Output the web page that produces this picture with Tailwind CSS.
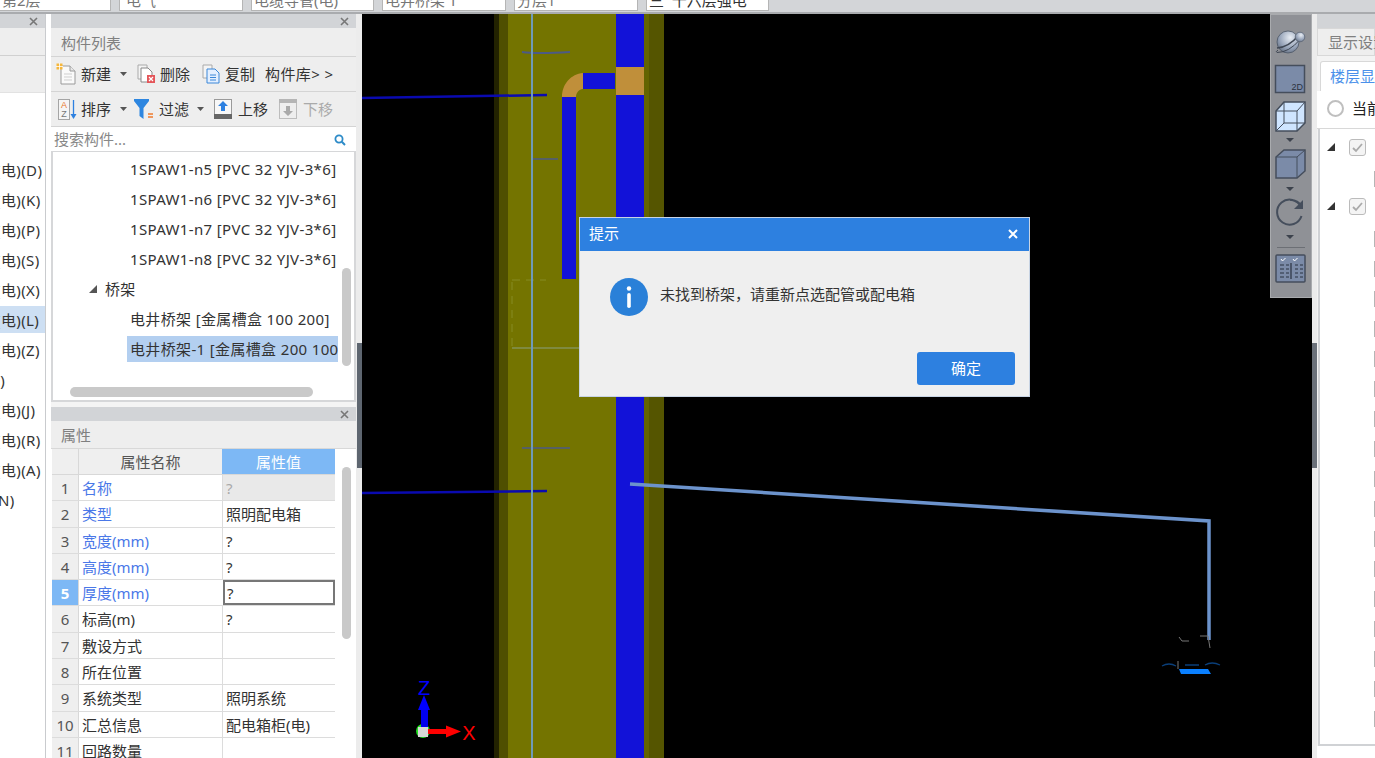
<!DOCTYPE html>
<html lang="zh"><head><meta charset="utf-8"><script src="https://cdn.jsdelivr.net/npm/@tailwindcss/browser@4"></script></head>
<body class="m-0 overflow-hidden">
<div class="flex flex-col w-[1375px] h-[758px] overflow-hidden bg-[#eeeeee] text-[15px] text-[#333] [font-family:'Noto_Sans','Noto_Sans_CJK_SC',sans-serif]">
  <!-- top strip -->
  <div class="h-[14px] shrink-0 flex gap-2 bg-[#d3d5d8] border-b-2 border-[#a9abae] pl-0">
    <div class="w-[111px] h-[11px] bg-white border-r border-b border-[#b5b5b5] overflow-hidden leading-[18px] text-[#777] whitespace-nowrap"><div class="-mt-[9px] pl-[2px]">第2层</div></div>
    <div class="w-[124px] h-[11px] bg-white border border-t-0 border-[#b5b5b5] overflow-hidden leading-[18px] text-[#777] whitespace-nowrap"><div class="-mt-[9px] pl-[6px]">电气</div></div>
    <div class="w-[123px] h-[11px] bg-white border border-t-0 border-[#b5b5b5] overflow-hidden leading-[18px] text-[#777] whitespace-nowrap"><div class="-mt-[9px] pl-[2px]">电缆导管(电)</div></div>
    <div class="w-[124px] h-[11px] bg-white border border-t-0 border-[#b5b5b5] overflow-hidden leading-[18px] text-[#777] whitespace-nowrap"><div class="-mt-[9px] pl-[2px]">电井桥架 T</div></div>
    <div class="w-[124px] h-[11px] bg-white border border-t-0 border-[#b5b5b5] overflow-hidden leading-[18px] text-[#777] whitespace-nowrap"><div class="-mt-[9px] pl-[2px]">分层1</div></div>
    <div class="w-[123px] h-[11px] bg-white border border-t-0 border-[#b5b5b5] overflow-hidden leading-[18px] text-[#333] whitespace-nowrap"><div class="-mt-[9px] pl-[2px]">三&nbsp;&nbsp;十六层强电</div></div>
  </div>

  <div class="flex h-[744px]">
    <!-- left panel -->
    <div class="w-[51px] shrink-0 bg-white">
      <div class="w-[46px] h-full border-r border-[#c9cbce] overflow-hidden flex flex-col">
        <div class="h-[14px] bg-[#d2d4d7] flex items-center justify-end pr-[7px] shrink-0"><svg class="w-[9px] h-[9px]" viewBox="0 0 9 9"><path d="M1 1l7 7M8 1l-7 7" stroke="#777" stroke-width="1.6"/></svg></div>
        <div class="h-[28px] bg-[#eeeeee] border-b border-[#d0d0d0] shrink-0"></div>
        <div class="h-[36px] bg-[#eeeeee] shrink-0"></div>
        <div class="h-[1px] bg-[#e2e2e2] shrink-0"></div>
        <div class="pt-[62px] bg-white whitespace-nowrap tracking-[0.4px]">
          <div class="h-[30px] leading-[30px] -ml-[4px]">(电)(D)</div>
          <div class="h-[30px] leading-[30px] -ml-[4px]">(电)(K)</div>
          <div class="h-[30px] leading-[30px] -ml-[4px]">(电)(P)</div>
          <div class="h-[30px] leading-[30px] -ml-[4px]">(电)(S)</div>
          <div class="h-[30px] leading-[30px] -ml-[4px]">(电)(X)</div>
          <div class="h-[27px] mt-[1px] mb-[2px] leading-[28px] bg-[#cddff3]"><span class="-ml-[4px] inline-block">(电)(L)</span></div>
          <div class="h-[30px] leading-[30px] -ml-[4px]">(电)(Z)</div>
          <div class="h-[30px] leading-[30px] -ml-[4px]">&nbsp;)</div>
          <div class="h-[30px] leading-[30px] -ml-[4px]">(电)(J)</div>
          <div class="h-[30px] leading-[30px] -ml-[4px]">(电)(R)</div>
          <div class="h-[30px] leading-[30px] -ml-[4px]">(电)(A)</div>
          <div class="h-[30px] leading-[30px] -ml-[2px]">N)</div>
        </div>
      </div>
    </div>

    <!-- middle panel -->
    <div class="w-[305px] shrink-0 flex flex-col bg-[#eeeeee]">
      <div class="h-[14px] bg-[#d2d4d7] flex items-center justify-end pr-[7px] shrink-0"><svg class="w-[9px] h-[9px]" viewBox="0 0 9 9"><path d="M1 1l7 7M8 1l-7 7" stroke="#777" stroke-width="1.6"/></svg></div>
      <div class="h-[29px] flex items-center pl-[10px] pt-[2px] text-[#808080] border-b border-[#d4d4d4] shrink-0">构件列表</div>
      <!-- toolbar 1 -->
      <div class="h-[35px] flex items-center border-b border-[#d4d4d4] shrink-0 whitespace-nowrap">
        <svg class="ml-[5px] w-[21px] h-[22px] shrink-0" viewBox="0 0 21 22"><path d="M5 3h9l5 5v13H5z" fill="#fafafa" stroke="#9a9a9a"/><path d="M14 3v5h5" fill="#e8e8e8" stroke="#9a9a9a"/><path d="M8 11h8M8 14h8M8 17h8" stroke="#cfcfcf"/><rect x="0.5" y="0.5" width="6" height="6" fill="#f6b73c"/><path d="M3.5 0v7M0 3.5h7" stroke="#fff" stroke-width=".8"/></svg>
        <span class="ml-[4px] w-[31px]">新建</span>
        <svg class="ml-[8px] w-[7px] h-[4px]" viewBox="0 0 7 4"><path d="M0 0h7L3.500 4z" fill="#555"/></svg>
        <svg class="ml-[10px] w-[19px] h-[20px] shrink-0" viewBox="0 0 19 20"><path d="M1 1h9v14H1z" fill="#f4f4f4" stroke="#aaa"/><path d="M4 4h7l4 4v10H4z" fill="#fff" stroke="#888"/><rect x="10" y="11" width="8" height="8" fill="#e4565a"/><path d="M12 13l4 4M16 13l-4 4" stroke="#fff" stroke-width="1.2"/></svg>
        <span class="ml-[4px] w-[30px]">删除</span>
        <svg class="ml-[12px] w-[18px] h-[20px] shrink-0" viewBox="0 0 18 20"><path d="M1 1h9v13H1z" fill="#f4f4f4" stroke="#aaa"/><path d="M5 5h8l4 4v10H5z" fill="#e3efff" stroke="#3a87d8"/><path d="M8 11h6M8 13.500h6M8 16h6" stroke="#3a87d8"/></svg>
        <span class="ml-[5px] w-[30px]">复制</span>
        <span class="ml-[10px] tracking-[0.4px]">构件库&gt;&nbsp;&gt;</span>
      </div>
      <!-- toolbar 2 -->
      <div class="h-[35px] flex items-center border-b border-[#d4d4d4] shrink-0 whitespace-nowrap">
        <svg class="ml-[7px] w-[19px] h-[21px] shrink-0" viewBox="0 0 19 21"><rect x="0.5" y="0.5" width="11" height="20" fill="#f5f5f5" stroke="#a5a5a5"/><text x="6" y="9" text-anchor="middle" font-size="9" fill="#e8762c" font-family="Liberation Sans">A</text><text x="6" y="18" text-anchor="middle" font-size="9" fill="#777" font-family="Liberation Sans">Z</text><path d="M15.500 1v17" stroke="#2d80e0" stroke-width="1.300"/><path d="M12.500 15l3 5 3-5z" fill="#2d80e0"/></svg>
        <span class="ml-[4px] w-[31px]">排序</span>
        <svg class="ml-[8px] w-[7px] h-[4px]" viewBox="0 0 7 4"><path d="M0 0h7L3.500 4z" fill="#555"/></svg>
        <svg class="ml-[7px] w-[20px] h-[20px] shrink-0" viewBox="0 0 20 20"><path d="M0 0h15v2L9.500 9v11L5.500 17V9L0 2z" fill="#2d86e0"/><path d="M14 15h5M14 18h5" stroke="#ee7b2e" stroke-width="1.500"/></svg>
        <span class="ml-[5px] w-[30px]">过滤</span>
        <svg class="ml-[8px] w-[7px] h-[4px]" viewBox="0 0 7 4"><path d="M0 0h7L3.500 4z" fill="#555"/></svg>
        <svg class="ml-[10px] w-[18px] h-[20px] shrink-0" viewBox="0 0 18 20"><rect x="0.500" y="0.500" width="17" height="19" fill="#f7f7f7" stroke="#9a9a9a"/><rect x="0" y="15" width="18" height="5" fill="#666"/><path d="M9 2l5 5h-3v5H7V7H4z" fill="#2d80e0"/></svg>
        <span class="ml-[6px] w-[30px]">上移</span>
        <svg class="ml-[11px] w-[18px] h-[20px] shrink-0" viewBox="0 0 18 20"><rect x="0.500" y="0.500" width="17" height="19" fill="#eee" stroke="#bdbdbd"/><rect x="0" y="0" width="18" height="4" fill="#b5b5b5"/><path d="M9 17l5-5h-3V7H7v5H4z" fill="#a9a9a9"/></svg>
        <span class="ml-[6px] text-[#aaa]">下移</span>
      </div>
      <!-- search -->
      <div class="h-[24px] bg-white flex items-center justify-between pl-[3px] pr-[10px] pt-[1px] text-[#888] shrink-0">
        <span>搜索构件...</span>
        <svg class="w-[12px] h-[12px]" viewBox="0 0 12 12"><circle cx="5" cy="5" r="3.600" fill="none" stroke="#2d8bc8" stroke-width="1.800"/><path d="M7.800 7.800L11 11" stroke="#2d8bc8" stroke-width="2"/></svg>
      </div>
      <!-- tree -->
      <div class="relative h-[251px] shrink-0 bg-white border-2 border-t-[1px] border-[#d6d7d9] overflow-hidden whitespace-nowrap tracking-[0.35px] pt-[2px]">
        <div class="h-[30px] leading-[30px] pl-[77px] w-[285px] overflow-hidden">1SPAW1-n5 [PVC 32 YJV-3*6]</div>
        <div class="h-[30px] leading-[30px] pl-[77px] w-[285px] overflow-hidden">1SPAW1-n6 [PVC 32 YJV-3*6]</div>
        <div class="h-[30px] leading-[30px] pl-[77px] w-[285px] overflow-hidden">1SPAW1-n7 [PVC 32 YJV-3*6]</div>
        <div class="h-[30px] leading-[30px] pl-[77px] w-[285px] overflow-hidden">1SPAW1-n8 [PVC 32 YJV-3*6]</div>
        <div class="h-[30px] flex items-center pl-[36px]"><svg class="w-[8px] h-[8px]" viewBox="0 0 8 8"><path d="M8 0v8H0z" fill="#555"/></svg><span class="ml-[8px]">桥架</span></div>
        <div class="h-[30px] leading-[30px] pl-[77px] w-[285px] overflow-hidden">电井桥架 [金属槽盒 100 200]</div>
        <div class="h-[26px] leading-[26px] ml-[74px] pl-[3px] mt-[2px] w-[211px] overflow-hidden bg-[#b3cff0]">电井桥架-1 [金属槽盒 200 100]</div>
        <div class="absolute left-[289px] top-[116px] w-[9px] h-[98px] rounded-full bg-[#c9c9c9]"></div>
        <div class="absolute left-[17px] top-[235px] w-[243px] h-[10px] rounded-full bg-[#c9c9c9]"></div>
      </div>
      <div class="h-[5px] bg-[#f4f4f4] shrink-0"></div>
      <div class="h-[14px] bg-[#d2d4d7] flex items-center justify-end pr-[7px] shrink-0"><svg class="w-[9px] h-[9px]" viewBox="0 0 9 9"><path d="M1 1l7 7M8 1l-7 7" stroke="#777" stroke-width="1.6"/></svg></div>
      <div class="h-[27px] flex items-center pl-[10px] pt-[2px] text-[#808080] shrink-0">属性</div>
      <!-- table -->
      <div class="relative flex-1 bg-white overflow-hidden whitespace-nowrap border-t border-[#d8d8d8]">
        <div class="flex h-[26px] bg-[#efefef] border-b border-[#d8d8d8] w-[283px] ml-[1px]">
          <div class="w-[27px] border-r border-[#d8d8d8]"></div>
          <div class="w-[143px] text-center leading-[26px] text-[#555]">属性名称</div>
          <div class="w-[113px] text-center leading-[26px] bg-[#7db8f5] text-white">属性值</div>
        </div>
        <div class="flex h-[26.3px] w-[283px] ml-[1px] border-b border-[#dcdcdc]"><div class="w-[27px] bg-[#efefef] border-r border-[#d8d8d8] text-center text-[#555] leading-[26px]">1</div><div class="w-[144px] pl-[3px] border-r border-[#dcdcdc] text-[#4a78e8] leading-[26px]">名称</div><div class="flex-1 pl-[3px] bg-[#e9e9e9] text-[#aaa] leading-[26px]">?</div></div>
        <div class="flex h-[26.3px] w-[283px] ml-[1px] border-b border-[#dcdcdc]"><div class="w-[27px] bg-[#efefef] border-r border-[#d8d8d8] text-center text-[#555] leading-[26px]">2</div><div class="w-[144px] pl-[3px] border-r border-[#dcdcdc] text-[#4a78e8] leading-[26px]">类型</div><div class="flex-1 pl-[3px] leading-[26px]">照明配电箱</div></div>
        <div class="flex h-[26.3px] w-[283px] ml-[1px] border-b border-[#dcdcdc]"><div class="w-[27px] bg-[#efefef] border-r border-[#d8d8d8] text-center text-[#555] leading-[26px]">3</div><div class="w-[144px] pl-[3px] border-r border-[#dcdcdc] text-[#4a78e8] leading-[26px]">宽度(mm)</div><div class="flex-1 pl-[3px] leading-[26px]">?</div></div>
        <div class="flex h-[26.3px] w-[283px] ml-[1px] border-b border-[#dcdcdc]"><div class="w-[27px] bg-[#efefef] border-r border-[#d8d8d8] text-center text-[#555] leading-[26px]">4</div><div class="w-[144px] pl-[3px] border-r border-[#dcdcdc] text-[#4a78e8] leading-[26px]">高度(mm)</div><div class="flex-1 pl-[3px] leading-[26px]">?</div></div>
        <div class="flex h-[26.3px] w-[283px] ml-[1px] border-b border-[#dcdcdc]"><div class="w-[27px] bg-[#7db8f5] border-r border-[#d8d8d8] text-center text-white font-bold leading-[26px]">5</div><div class="w-[144px] pl-[3px] text-[#4a78e8] leading-[26px]">厚度(mm)</div><div class="flex-1 pl-[2px] border-2 border-[#777] leading-[22px]">?</div></div>
        <div class="flex h-[26.3px] w-[283px] ml-[1px] border-b border-[#dcdcdc]"><div class="w-[27px] bg-[#efefef] border-r border-[#d8d8d8] text-center text-[#555] leading-[26px]">6</div><div class="w-[144px] pl-[3px] border-r border-[#dcdcdc] leading-[26px]">标高(m)</div><div class="flex-1 pl-[3px] leading-[26px]">?</div></div>
        <div class="flex h-[26.3px] w-[283px] ml-[1px] border-b border-[#dcdcdc]"><div class="w-[27px] bg-[#efefef] border-r border-[#d8d8d8] text-center text-[#555] leading-[26px]">7</div><div class="w-[144px] pl-[3px] border-r border-[#dcdcdc] leading-[26px]">敷设方式</div><div class="flex-1"></div></div>
        <div class="flex h-[26.3px] w-[283px] ml-[1px] border-b border-[#dcdcdc]"><div class="w-[27px] bg-[#efefef] border-r border-[#d8d8d8] text-center text-[#555] leading-[26px]">8</div><div class="w-[144px] pl-[3px] border-r border-[#dcdcdc] leading-[26px]">所在位置</div><div class="flex-1"></div></div>
        <div class="flex h-[26.3px] w-[283px] ml-[1px] border-b border-[#dcdcdc]"><div class="w-[27px] bg-[#efefef] border-r border-[#d8d8d8] text-center text-[#555] leading-[26px]">9</div><div class="w-[144px] pl-[3px] border-r border-[#dcdcdc] leading-[26px]">系统类型</div><div class="flex-1 pl-[3px] leading-[26px]">照明系统</div></div>
        <div class="flex h-[26.3px] w-[283px] ml-[1px] border-b border-[#dcdcdc]"><div class="w-[27px] bg-[#efefef] border-r border-[#d8d8d8] text-center text-[#555] leading-[26px]">10</div><div class="w-[144px] pl-[3px] border-r border-[#dcdcdc] leading-[26px]">汇总信息</div><div class="flex-1 pl-[3px] leading-[26px]">配电箱柜(电)</div></div>
        <div class="flex h-[26.3px] w-[283px] ml-[1px] border-b border-[#dcdcdc]"><div class="w-[27px] bg-[#efefef] border-r border-[#d8d8d8] text-center text-[#555] leading-[26px]">11</div><div class="w-[144px] pl-[3px] border-r border-[#dcdcdc] leading-[26px]">回路数量</div><div class="flex-1"></div></div>
        <div class="absolute left-[291px] top-[18px] w-[9px] h-[172px] rounded-full bg-[#c9c9c9]"></div>
      </div>
    </div>

    <!-- splitter -->
    <div class="w-[6px] shrink-0 bg-[#ececec]"><div class="mt-[329px] ml-[1px] h-[125px] bg-[#5e6670]"></div></div>

    <!-- 3D viewport -->
    <div class="relative w-[950px] shrink-0 bg-black overflow-hidden">
      <svg class="absolute inset-0 w-[950px] h-[744px]" viewBox="362 14 950 744" font-family="Liberation Sans">
        <rect x="494" y="14" width="5" height="744" fill="#222200"/>
        <rect x="499" y="14" width="9" height="744" fill="#4f4f00"/>
        <rect x="508" y="14" width="108" height="744" fill="#747400"/>
        <rect x="616" y="14" width="28" height="744" fill="#1212d8"/>
        <rect x="644" y="14" width="5" height="744" fill="#646400"/>
        <rect x="649" y="14" width="15" height="744" fill="#555500"/>
        <rect x="616" y="67" width="28" height="28" fill="#c08f3a"/>
        <rect x="562" y="97" width="14" height="182" fill="#1212d8"/>
        <rect x="583" y="73" width="32" height="16" fill="#1212d8"/>
        <path d="M562 97c0-13 9-23 21-24v16c-4 0-7 4-7 8z" fill="#c08f3a"/>
        <path d="M522 52q14 2 48 0" fill="none" stroke="#4c5a86" stroke-width="1.800"/>
        <path d="M532 159h26" stroke="#4c5a86" stroke-width="1.500"/>
        <path d="M522 448h48" stroke="#4c5a86" stroke-width="1.500"/>
        <path d="M512 280h34M512 282v65" stroke="#868b22" stroke-width="1" stroke-dasharray="8 6"/>
        <path d="M512 348h68" stroke="#7f8a40" stroke-width="2"/>
        <path d="M362 98L547 95" stroke="#0a0ab0" stroke-width="2.500"/>
        <path d="M362 493L547 491" stroke="#0a0ab0" stroke-width="2.500"/>
        <rect x="531" y="14" width="2" height="744" fill="#6f9ab8"/>
        <path d="M630 484L1209 521V640" fill="none" stroke="#6c93cc" stroke-width="3.500"/>
        <path d="M1179 637l3 4h7M1200 636h8l2 12" fill="none" stroke="#777" stroke-width="1"/>
        <path d="M1162 666q7-4 14 0M1185 665h14M1205 665q7-4 15 0" fill="none" stroke="#0a3f7a" stroke-width="1.300"/>
        <path d="M1178 661v8" stroke="#777" stroke-width="1"/>
        <path d="M1179 669h29l3 5h-30z" fill="#0a80ff"/>
        <!-- axes -->
        <circle cx="423" cy="731" r="7" fill="#22e022"/>
        <rect x="421" y="708" width="7" height="20" fill="#0000ee"/>
        <path d="M424 695l6 15h-12z" fill="#0000ff"/>
        <rect x="428" y="729" width="20" height="5" fill="#ff0000"/>
        <path d="M461 731.500l-15-6v12z" fill="#ff0000"/>
        <rect x="418" y="727" width="10" height="10" fill="#d8d8d8"/>
        <text x="424" y="695" text-anchor="middle" font-size="20" fill="#0000ff">Z</text>
        <text x="469" y="740" text-anchor="middle" font-size="20" fill="#ff0000">X</text>
      </svg>

      <!-- floating view toolbar -->
      <div class="absolute top-0 right-0 w-[42px] h-[284px] bg-[#8f9196] border border-[#a9abae]">
        <svg class="w-[40px] h-[282px]" viewBox="1271 15 40 282" font-family="Liberation Sans">
          <defs><radialGradient id="sph" cx="0.6" cy="0.3" r="0.8"><stop offset="0" stop-color="#e8edf4"/><stop offset="0.6" stop-color="#96a3b8"/><stop offset="1" stop-color="#5d6879"/></radialGradient></defs>
          <circle cx="1288" cy="42" r="11" fill="url(#sph)" stroke="#4b5565" stroke-width="0.800"/>
          <path d="M1277 48q12-1 21-12" stroke="#3f4754" stroke-width="1.500" fill="none"/>
          <path d="M1278 50q-3 2-1 2.500 12 0 23-13" stroke="#3f4754" fill="none"/>
          <circle cx="1300" cy="37" r="4.800" fill="url(#sph)" stroke="#5a6575" stroke-width="0.800"/>
          <rect x="1275.500" y="65.500" width="29" height="27" fill="#7b8ba8" stroke="#454e5c" stroke-width="1.500"/>
          <text x="1303" y="90" text-anchor="end" font-size="9" fill="#2b3240">2D</text>
          <path d="M1276 111l8-9h21v21l-8 8h-21z" fill="#cfe5ff" stroke="#454e5c" stroke-width="1.500"/>
          <path d="M1276 111h21v20M1297 111l8-9M1284 102v21h21M1284 123l-8 8" fill="none" stroke="#454e5c"/>
          <path d="M1286 138h8l-4 4z" fill="#3c424c"/>
          <path d="M1276 157l8-7h21v21l-8 7h-21z" fill="#7b8ba8" stroke="#454e5c" stroke-width="1.500"/>
          <path d="M1276 157h21v21M1297 157l8-7" fill="none" stroke="#454e5c"/>
          <path d="M1286 187h8l-4 4z" fill="#3c424c"/>
          <path d="M1301 207a12.500 12.500 0 1 0 0.500 9M1290 200a12 12 0 0 1 12 7" fill="none" stroke="#454e5c" stroke-width="2"/>
          <path d="M1303 200v9h-9z" fill="#454e5c"/>
          <path d="M1286 235h8l-4 4z" fill="#3c424c"/>
          <path d="M1277 247.500h28" stroke="#6c6f75"/>
          <rect x="1276" y="255" width="29" height="27" rx="1" fill="#7b8ba8" stroke="#454e5c" stroke-width="1.500"/>
          <path d="M1280 265h4M1280 269h4M1280 273h4M1280 277h4M1286 265h3M1286 269h3M1286 273h3M1286 277h3M1295 265h3M1295 269h3M1295 273h3M1295 277h3M1300 265h3M1300 269h3M1300 273h3M1300 277h3" stroke="#2b3240"/>
          <path d="M1291 263v16" stroke="#2b3240" stroke-width="1.200"/>
          <path d="M1281 259l1.500 2 3-3M1293 259l1.500 2 3-3" fill="none" stroke="#fff"/>
        </svg>
      </div>

      <!-- dialog -->
      <div class="absolute left-[217px] top-[203px] w-[451px] h-[180px] bg-[#efefef] border border-[#c8d4e4] flex flex-col">
        <div class="h-[33px] bg-[#2d80e0] flex items-center justify-between pl-[9px] pr-[11px] pb-[2px] text-white shrink-0">
          <span>提示</span>
          <svg class="w-[10px] h-[10px]" viewBox="0 0 10 10"><path d="M1 1l8 8M9 1l-8 8" stroke="#fff" stroke-width="2"/></svg>
        </div>
        <div class="flex items-center pl-[30px] mt-[27px]">
          <svg class="w-[38px] h-[38px] shrink-0" viewBox="0 0 38 38"><circle cx="19" cy="19" r="19" fill="#2a80d8"/><circle cx="19" cy="10.500" r="2.200" fill="#fff"/><rect x="17.200" y="15" width="3.600" height="15" rx="1.800" fill="#fff"/></svg>
          <span class="ml-[12px] -mt-[6px] text-[#333]">未找到桥架，请重新点选配管或配电箱</span>
        </div>
        <div class="flex justify-end pr-[14px] mt-auto mb-[11px]">
          <div class="w-[98px] h-[33px] rounded-[3px] bg-[#2d80e0] text-white flex items-center justify-center">确定</div>
        </div>
      </div>
    </div>

    <!-- splitter right -->
    <div class="w-[5px] shrink-0 bg-[#ececec]"><div class="mt-[329px] h-[125px] bg-[#6a7079]"></div></div>

    <!-- right panel -->
    <div class="w-[58px] shrink-0 flex flex-col overflow-hidden whitespace-nowrap bg-[#f3f3f3]">
      <div class="h-[14px] bg-[#d2d4d7] shrink-0"></div>
      <div class="h-[28px] shrink-0 bg-[#eeeeee] border border-[#d8d8d8] flex items-center pl-[10px] text-[#808080]">显示设置</div>
      <div class="h-[35px] shrink-0 flex items-end pl-[3px] bg-[#f3f3f3]"><div class="w-[60px] h-[30px] bg-white rounded-t-[3px] border border-b-0 border-[#d8d8d8] flex items-center pl-[9px] text-[#4a90ea]">楼层显示</div></div>
      <div class="h-[38px] shrink-0 bg-white flex items-center pl-[10px] pb-[2px] border-b border-[#d8d8d8]"><div class="w-[17px] h-[17px] rounded-full border-2 border-[#bfbfbf] shrink-0"></div><span class="ml-[8px] text-[#222]">当前楼层</span></div>
      <div class="relative h-[617px] shrink-0 ml-[1px] bg-white border-l-2 border-b-2 border-[#d0d2d5]">
        <div class="h-[60px] flex pt-[10px] pl-[7px] items-start"><svg class="w-[8px] h-[8px] mt-[4px]" viewBox="0 0 8 8"><path d="M8 0v8H0z" fill="#333"/></svg><div class="ml-[14px] w-[17px] h-[17px] rounded-[3px] border border-[#bbb] bg-[#f4f4f4] flex items-center justify-center"><svg class="w-[11px] h-[11px]" viewBox="0 0 11 11"><path d="M1 6l3 3 6-7" fill="none" stroke="#aaa" stroke-width="1.800"/></svg></div></div>
        <div class="h-[60px] flex pt-[9px] pl-[7px] items-start"><svg class="w-[8px] h-[8px] mt-[4px]" viewBox="0 0 8 8"><path d="M8 0v8H0z" fill="#333"/></svg><div class="ml-[14px] w-[17px] h-[17px] rounded-[3px] border border-[#bbb] bg-[#f4f4f4] flex items-center justify-center"><svg class="w-[11px] h-[11px]" viewBox="0 0 11 11"><path d="M1 6l3 3 6-7" fill="none" stroke="#aaa" stroke-width="1.800"/></svg></div></div>
        <svg class="absolute left-[54px] top-0 w-[2px] h-[617px]" viewBox="0 0 2 617"><path d="M1 42v16M1 102v16M1 132v16M1 162v16M1 192v16M1 222v16M1 252v16M1 282v16M1 312v16M1 342v16M1 372v16M1 402v16M1 432v16M1 462v16M1 492v16M1 522v16M1 552v16M1 582v16" stroke="#b5b5b5" stroke-width="2"/></svg>
      </div>
      <div class="flex-1 bg-white"></div>
    </div>
  </div>
</div>
</body></html>
